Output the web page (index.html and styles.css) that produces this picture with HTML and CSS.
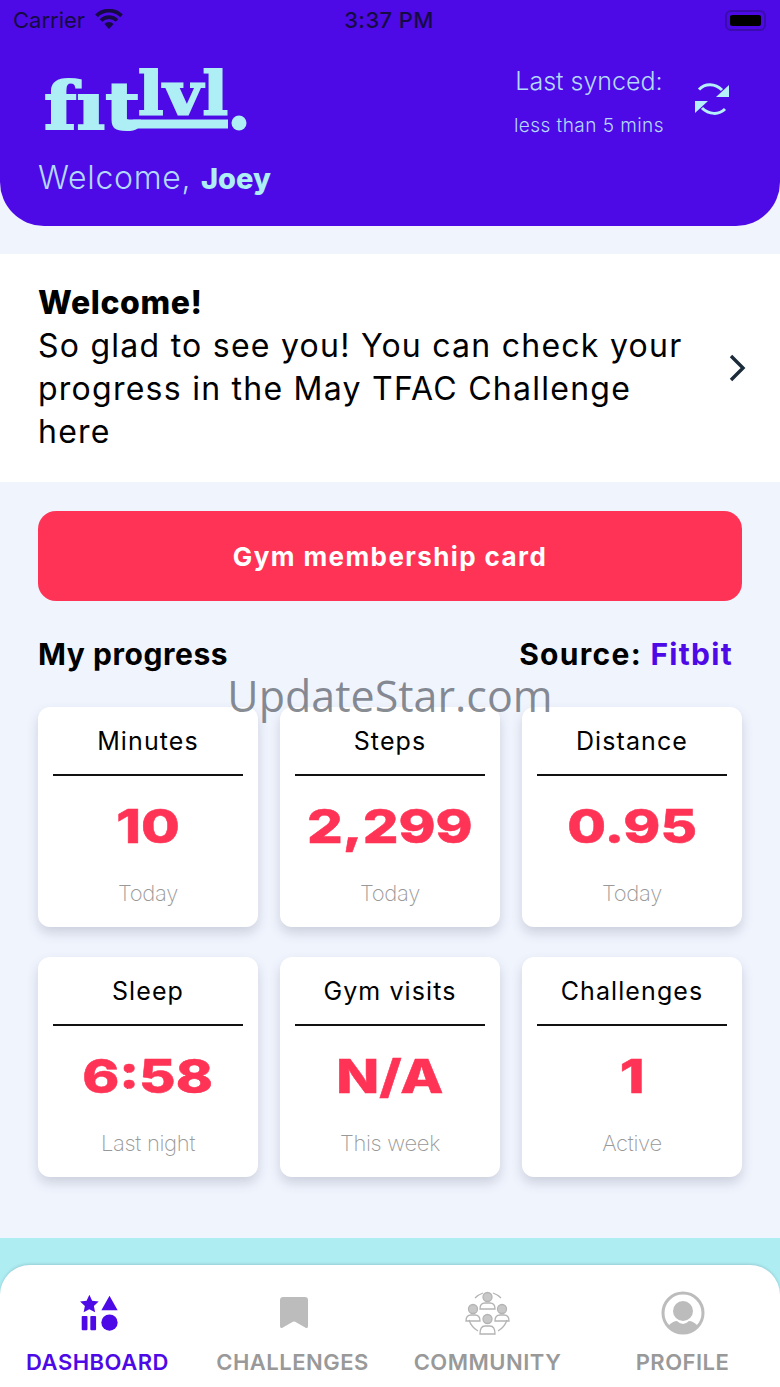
FILE: index.html
```html
<!DOCTYPE html>
<html lang="en">
	<head>
		<meta charset="UTF-8" />
		<meta name="viewport" content="width=device-width, initial-scale=1.0" />
		<title>fitlvl Dashboard</title>
		<link rel="stylesheet" href="styles.css">
	</head>
	<body>
		<div class="page">
			<header class="header">
				<div class="statusbar">
					<div class="carrier">
						<span>Carrier</span>
						<svg class="wifi" viewBox="0 0 28 20" width="28" height="20">
							<path d="M14 20l-4.600-5a6.500 6.500 0 0 1 9.200 0z" fill="#160a45"/>
							<path d="M6 11.500a11.300 11.300 0 0 1 16 0" fill="none" stroke="#160a45" stroke-width="3.800"/>
							<path d="M1.500 6.800a17.700 17.700 0 0 1 25 0" fill="none" stroke="#160a45" stroke-width="3.800"/>
						</svg>
					</div>
					<span class="time">3:37 PM</span>
					<div class="battery"><i></i></div>
				</div>
				<div class="header-row">
					<div class="brand">
						<svg class="logo" viewBox="0 -14 210 94" width="210" height="94">
							<g class="logo-text">
								<text x="-1" y="62" font-size="66" textLength="96" lengthAdjust="spacingAndGlyphs">fıt</text>
								<text x="93" y="48" font-size="60" textLength="90" lengthAdjust="spacingAndGlyphs">lvl</text>
							</g>
							<path d="M76.500 40v10q0 7 8 7h98.500" fill="none" stroke="#aeeef5" stroke-width="9"/>
							<circle cx="194" cy="56" r="7.500" fill="#aeeef5"/>
						</svg>
						<p class="hello">Welcome, <b>Joey</b></p>
					</div>
					<div class="sync">
						<div class="sync-text">
							<p class="sync-label">Last synced:</p>
							<p class="sync-age">less than 5 mins</p>
						</div>
						<svg class="refresh" viewBox="0 0 36 36" width="36" height="36">
							<path d="M5 8.500C11 2 21 2 28 9" fill="none" stroke="#b5f0fa" stroke-width="3"/>
							<path d="M35 4v12H22z" fill="#b5f0fa"/>
							<path d="M31 28C25 34 15 34 8 27" fill="none" stroke="#b5f0fa" stroke-width="3"/>
							<path d="M1 32V20h13z" fill="#b5f0fa"/>
						</svg>
					</div>
				</div>
			</header>

			<section class="notice">
				<p class="notice-text"><b>Welcome!</b><br>So glad to see you! You can check your progress in the May TFAC Challenge here</p>
				<svg class="chevron" viewBox="0 0 18 28" width="18" height="28">
					<path d="M3 2l12 12L3 26" fill="none" stroke="#1c2b3a" stroke-width="3.400"/>
				</svg>
			</section>

			<main class="content">
				<button class="gym-btn">Gym membership card</button>
				<div class="progress-head">
					<h2>My progress</h2>
					<h2 class="source-label">Source: <span class="source">Fitbit</span></h2>
				</div>
				<div class="cards">
					<div class="card"><h3>Minutes</h3><div class="num"><span>10</span></div><p>Today</p></div>
					<div class="card"><h3>Steps</h3><div class="num"><span>2,299</span></div><p>Today</p></div>
					<div class="card"><h3>Distance</h3><div class="num"><span>0.95</span></div><p>Today</p></div>
					<div class="card"><h3>Sleep</h3><div class="num"><span>6:58</span></div><p>Last night</p></div>
					<div class="card"><h3>Gym visits</h3><div class="num"><span>N/A</span></div><p>This week</p></div>
					<div class="card"><h3>Challenges</h3><div class="num"><span>1</span></div><p>Active</p></div>
				</div>
			</main>

			<div class="watermark">UpdateStar.com</div>

			<div class="teal">
				<nav class="tabs">
					<a class="tab active">
						<svg viewBox="-5 -4 48 48" width="46" height="46">
							<path d="M10 1l2.900 6.200 6.800.8-5 4.600 1.300 6.700L10 16.100l-6 3.200 1.300-6.700-5-4.600 6.800-.8z" fill="#4d0ae6"/>
							<path d="M31 2l8.500 15h-17z" fill="#4d0ae6"/>
							<rect x="2" y="23" width="6" height="15" rx="1" fill="#4d0ae6"/>
							<rect x="11" y="23" width="6" height="15" rx="1" fill="#4d0ae6"/>
							<circle cx="31" cy="30" r="8.500" fill="#4d0ae6"/>
						</svg>
						<span>DASHBOARD</span>
					</a>
					<a class="tab">
						<svg viewBox="-1.300 -4.500 42.700 42.700" width="46" height="46">
							<path d="M8 5q0-3 3-3h20q3 0 3 3v24q0 3-3 1l-9-5q-1-.6-2 0l-9 5q-3 2-3-1z" fill="#bcbcbc"/>
						</svg>
						<span>CHALLENGES</span>
					</a>
					<a class="tab">
						<svg viewBox="0 0 46 46" width="46" height="46" fill="none" stroke="#b4b4b4" stroke-width="1.300">
							<path d="M10 8a20 20 0 0 1 8-5M28 3a20 20 0 0 1 8 5M4 30a20 20 0 0 0 9 11M42 30a20 20 0 0 1-9 11"/>
							<circle cx="22.500" cy="7" r="4.500" fill="#c8c8c8"/>
							<path d="M15 19q0-6 5-6h5q5 0 5 6z"/>
							<circle cx="8" cy="19" r="4.500" fill="#c8c8c8"/>
							<path d="M1 31q0-6 5-6h4q5 0 5 6z"/>
							<circle cx="37" cy="19" r="4.500" fill="#c8c8c8"/>
							<path d="M30 31q0-6 5-6h4q5 0 5 6z"/>
							<circle cx="22.500" cy="29" r="4.500" fill="#c8c8c8"/>
							<path d="M15 44q0-8 5-8h5q5 0 5 8z"/>
						</svg>
						<span>COMMUNITY</span>
					</a>
					<a class="tab">
						<svg viewBox="-1 -1 46 46" width="46" height="46">
							<circle cx="22" cy="22" r="20" fill="#fff" stroke="#bcbcbc" stroke-width="3"/>
							<circle cx="22" cy="20" r="10" fill="#bcbcbc"/>
							<path d="M7 35q5-5 9-5 3 3 6 3t6-3q4 0 9 5a20 20 0 0 1-30 0z" fill="#bcbcbc"/>
						</svg>
						<span>PROFILE</span>
					</a>
				</nav>
			</div>
		</div>
	</body>
</html>
```

FILE: styles.css
```css
* {
	margin: 0;
	padding: 0;
	box-sizing: border-box;
}
body {
	background-color: #f0f4fd;
	font-family: "Inter", "Liberation Sans", sans-serif;
}
.page {
	position: relative;
	width: 780px;
	height: 1387px;
	overflow: hidden;
	display: flex;
	flex-direction: column;
}

/* header */
.header {
	height: 226px;
	background-color: #4d0ae6;
	border-radius: 0 0 44px 44px;
	padding: 0 13px;
}
.statusbar {
	height: 40px;
	display: flex;
	align-items: center;
	justify-content: space-between;
	color: #160a45;
	font-size: 22px;
	padding-right: 1px;
}
.carrier {
	display: flex;
	align-items: center;
	gap: 10px;
	width: 140px;
}
.wifi {
	margin-top: -3px;
}
.time {
	font-weight: 500;
	letter-spacing: 0.4px;
}
.battery {
	width: 41px;
	height: 21px;
	padding: 3px;
	border: 2px solid #3a0cae;
	border-radius: 6px;
	margin-left: 100px;
}
.battery i {
	display: block;
	height: 100%;
	background-color: #000;
	border-radius: 2px;
}
.header-row {
	display: flex;
	justify-content: space-between;
	padding: 13px 37px 0 25px;
}
.logo {
	display: block;
	margin-left: 7px;
}
.logo-text {
	font-family: "DejaVu Serif", serif;
	font-weight: 700;
	fill: #aeeef5;
	stroke: #aeeef5;
	stroke-width: 2px;
}
.hello {
	margin-top: 11px;
	font-size: 32px;
	line-height: 40px;
	font-weight: 300;
	color: #b3d9ff;
	letter-spacing: 0.7px;
}
.hello b {
	font-weight: 800;
	font-size: 29px;
	color: #aeeef5;
	letter-spacing: 0;
}
.sync {
	display: flex;
	gap: 30px;
	padding-top: 12px;
}
.sync-text {
	text-align: center;
	color: #b3d9ff;
}
.sync-label {
	font-size: 25px;
	line-height: 32px;
	font-weight: 300;
}
.sync-age {
	margin-top: 17px;
	font-size: 19px;
	line-height: 24px;
	font-weight: 300;
	letter-spacing: 0.45px;
}
.refresh {
	margin-top: 16px;
}

/* welcome notice */
.notice {
	margin-top: 28px;
	height: 228px;
	background-color: #fff;
	padding: 27px 34px 0 38px;
	display: flex;
	justify-content: space-between;
	align-items: center;
}
.notice-text {
	width: 660px;
	align-self: flex-start;
	font-size: 32px;
	line-height: 43px;
	color: #000;
	letter-spacing: 1.25px;
}
.notice-text b {
	font-weight: 800;
	letter-spacing: 0.6px;
}
.chevron {
	margin-top: -28px;
}

/* main */
.content {
	padding: 29px 38px 0;
}
.gym-btn {
	display: block;
	width: 100%;
	height: 90px;
	border: none;
	border-radius: 18px;
	background-color: #ff3355;
	color: #fff;
	font-family: inherit;
	font-size: 26px;
	font-weight: 700;
	letter-spacing: 1.4px;
}
.progress-head {
	display: flex;
	justify-content: space-between;
	padding: 33px 9px 0 0;
}
.progress-head h2 {
	font-size: 30px;
	line-height: 40px;
	font-weight: 700;
	color: #000;
	letter-spacing: 0.55px;
}
.progress-head .source-label {
	letter-spacing: 1.3px;
}
.source {
	color: #4d0ae6;
}
.cards {
	margin-top: 33px;
	display: grid;
	grid-template-columns: repeat(3, 220px);
	grid-auto-rows: 220px;
	column-gap: 22px;
	row-gap: 30px;
}
.card {
	background-color: #fff;
	border-radius: 12px;
	box-shadow: 0 6px 12px rgba(60, 70, 100, 0.2);
	padding: 0 15px;
	text-align: center;
}
.card h3 {
	height: 69px;
	border-bottom: 2px solid #111;
	font-size: 25px;
	line-height: 68px;
	font-weight: 400;
	color: #000;
	letter-spacing: 1.1px;
}
.num {
	height: 100px;
	line-height: 100px;
	font-size: 46px;
	font-weight: 800;
	color: #ff3355;
	-webkit-text-stroke: 0.5px #ff3355;
}
.num span {
	display: inline-block;
	transform: scaleX(1.22);
}
.card p {
	font-size: 22px;
	font-weight: 200;
	color: #999;
	line-height: 30px;
	margin-top: 2px;
	letter-spacing: -0.3px;
}

/* watermark over the page */
.watermark {
	position: absolute;
	left: 0;
	right: 0;
	top: 667px;
	text-align: center;
	font-family: "Open Sans", sans-serif;
	font-size: 43px;
	line-height: 58px;
	color: rgba(90, 95, 105, 0.72);
}

/* bottom tabs */
.teal {
	margin-top: auto;
	height: 149px;
	padding-top: 27px;
	background-image: linear-gradient(#aeeef2 60%, #a4e4ea);
}
.tabs {
	height: 122px;
	background-color: #fff;
	border-radius: 30px 30px 0 0;
	box-shadow: 0 -1px 3px rgba(60, 70, 100, 0.2);
	display: grid;
	grid-template-columns: repeat(4, 195px);
}
.tab {
	display: flex;
	flex-direction: column;
	align-items: center;
	padding-top: 25px;
	color: #999;
	font-size: 22px;
	line-height: 28px;
	font-weight: 600;
	letter-spacing: 0.5px;
	gap: 12px;
}
.tab.active {
	color: #4d0ae6;
}
```
